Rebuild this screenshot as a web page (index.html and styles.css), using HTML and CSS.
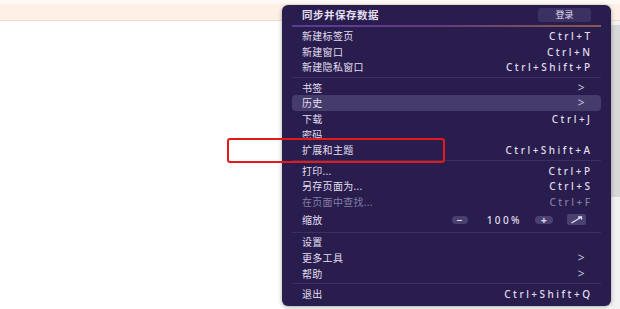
FILE: index.html
```html
<!DOCTYPE html>
<html lang="zh">
<head>
    <meta charset="UTF-8">
    <title>菜单</title>
    <link rel="stylesheet" href="styles.css">
</head>
<body>
    <div class="topbar"></div>
    <div class="page">
        <div class="content"></div>
        <div class="scroll-track"><div class="scroll-thumb"></div></div>
    </div>

    <!-- 主菜单 -->
    <div class="menu">
        <div class="menu-head">
            <span class="head-title">同步并保存数据</span>
            <span class="login-btn">登录</span>
        </div>
        <div class="head-line"></div>

        <div class="item"><span>新建标签页</span><span class="key">Ctrl+T</span></div>
        <div class="item"><span>新建窗口</span><span class="key">Ctrl+N</span></div>
        <div class="item"><span>新建隐私窗口</span><span class="key">Ctrl+Shift+P</span></div>
        <div class="sep"></div>
        <div class="item"><span>书签</span><span class="arrow">&gt;</span></div>
        <div class="item active"><span>历史</span><span class="arrow">&gt;</span></div>
        <div class="item"><span>下载</span><span class="key">Ctrl+J</span></div>
        <div class="item"><span>密码</span></div>
        <div class="item"><span>扩展和主题</span><span class="key">Ctrl+Shift+A</span></div>
        <div class="sep"></div>
        <div class="item"><span>打印...</span><span class="key">Ctrl+P</span></div>
        <div class="item"><span>另存页面为...</span><span class="key">Ctrl+S</span></div>
        <div class="item disabled"><span>在页面中查找...</span><span class="key">Ctrl+F</span></div>
        <div class="item zoom-row">
            <span>缩放</span>
            <div class="zoom-ctrl">
                <span class="pill minus">&minus;</span>
                <span class="zoom-val">100%</span>
                <span class="pill plus">+</span>
                <span class="full-btn">
                    <svg width="13" height="8" viewBox="0 0 13 8"><path d="M1.5 7 L11.5 1 M8 1 H11.5 V3.5" stroke="#e6e1f2" stroke-width="1.3" fill="none"/></svg>
                </span>
            </div>
        </div>
        <div class="sep"></div>
        <div class="item"><span>设置</span></div>
        <div class="item"><span>更多工具</span><span class="arrow">&gt;</span></div>
        <div class="item"><span>帮助</span><span class="arrow">&gt;</span></div>
        <div class="sep"></div>
        <div class="item"><span>退出</span><span class="key">Ctrl+Shift+Q</span></div>
    </div>

    <!-- 标注框 -->
    <div class="mark-box"></div>
</body>
</html>
```

FILE: styles.css
```css
html,body {
    margin: 0;
    padding: 0;
    background: #ffffff;
    font-family: 'Noto Sans', 'Noto Sans CJK SC', sans-serif;
    overflow: hidden;
    height: 309px;
}
.topbar {
    height: 20px;
    background: linear-gradient(180deg, #fdf9f5 0, #fdf9f5 4px, #fdf0e5 4px);
    border-bottom: 1px solid #f1dccb;
}
.page {
    display: flex;
    height: 288px;
}
.content {
    flex: 1;
}
.scroll-track {
    width: 9px;
    background: #f2f2f2;
}
.scroll-thumb {
    height: 172px;
    margin-top: 4px;
    background: #d8d8d8;
}
.menu {
    position: absolute;
    left: 282px;
    top: 5px;
    width: 309px;
    padding: 0 10px 4px 10px;
    background: #281d4d;
    border-radius: 6px;
    box-shadow: 0 1px 4px rgba(0,0,0,0.35);
    color: #e3dff0;
    font-size: 10px;
    line-height: 1;
}
.menu-head {
    display: flex;
    align-items: center;
    justify-content: space-between;
    height: 20px;
    padding: 0 10px;
}
.head-title {
    font-weight: 700;
    font-size: 10.5px;
    letter-spacing: 0.5px;
}
.login-btn {
    width: 53px;
    height: 14px;
    line-height: 14px;
    text-align: center;
    border-radius: 3px;
    background: #3c3262;
    font-size: 9px;
}
.head-line {
    height: 2px;
    background: linear-gradient(90deg, #5a3d9a 0%, #6b3a7c 50%, #8a5a4a 100%);
    margin-bottom: 1px;
}
.item {
    display: flex;
    align-items: center;
    justify-content: space-between;
    height: 15.7px;
    padding: 0 11px 0 10px;
    border-radius: 4px;
    letter-spacing: 0.3px;
}
.item.active {
    background: #463c6c;
}
.item.disabled {
    color: #857e a6;
    color: #857ea6;
}
.key {
    letter-spacing: 2.5px;
    margin-right: -2.5px;
    font-weight: 500;
}
.arrow {
    font-size: 12px;
    color: #c9c3dc;
    padding-right: 5px;
}
.sep {
    height: 1px;
    background: #3a3060;
    margin: 1.8px 0;
}
.zoom-row {
    height: 20px;
    padding-right: 15px;
}
.zoom-ctrl {
    display: flex;
    align-items: center;
}
.pill {
    height: 8px;
    line-height: 8px;
    border-radius: 5px;
    background: #4a4172;
    text-align: center;
    font-size: 10px;
    font-weight: 700;
}
.pill.minus {
    width: 16px;
}
.pill.plus {
    width: 18px;
}
.zoom-val {
    margin: 0 13px 0 19px;
    letter-spacing: 2.4px;
    font-weight: 500;
}
.full-btn {
    display: flex;
    align-items: center;
    justify-content: center;
    width: 19px;
    height: 11px;
    margin-left: 14px;
    background: #4a4172;
    border-radius: 2px;
}
.mark-box {
    position: absolute;
    left: 227px;
    top: 138px;
    width: 214px;
    height: 21px;
    border: 2px solid #e5191b;
    border-radius: 3px;
}
```
